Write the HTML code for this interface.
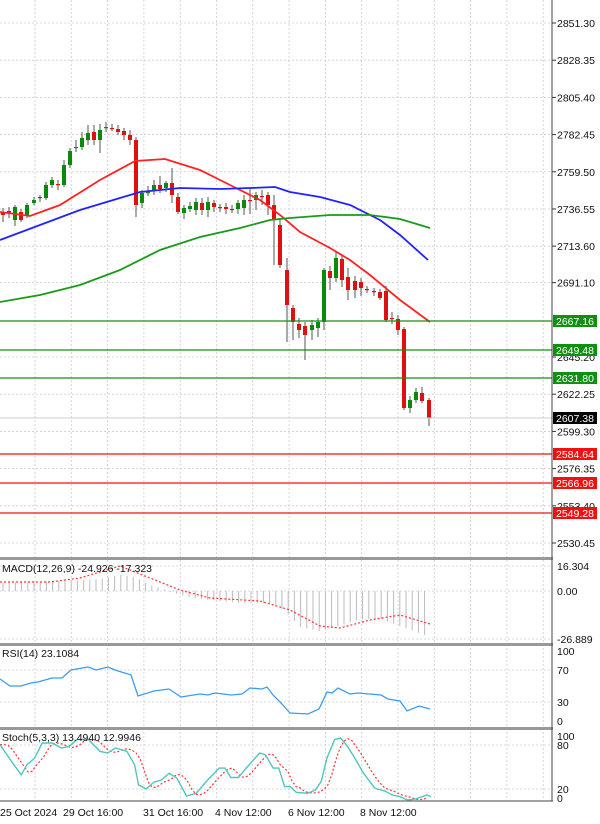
<!DOCTYPE html><html><head><meta charset="utf-8"><style>
body{margin:0;background:#fff;width:600px;height:819px;overflow:hidden;font-family:"Liberation Sans",sans-serif}
svg text{font-family:"Liberation Sans",sans-serif;font-size:10.5px;fill:#111}
</style></head><body>
<svg id="s" width="600" height="819" xmlns="http://www.w3.org/2000/svg"></svg>
<script>
var s=document.getElementById('s'),h='';
function Y(p){return 23+(2851.30-p)*1.6207;}
for(var x=35;x<552;x+=36.3){h+='<line x1="'+x+'" y1="0" x2="'+x+'" y2="800" stroke="#ccc" stroke-dasharray="2,2" stroke-width="0.8"/>';}
var labs=[2851.30,2828.35,2805.40,2782.45,2759.50,2736.55,2713.60,2691.10,2645.20,2622.25,2599.30,2576.35,2553.40,2530.45];
labs.forEach(function(p){var y=Y(p);h+='<line x1="0" y1="'+y+'" x2="552" y2="'+y+'" stroke="#ccc" stroke-dasharray="2,2" stroke-width="0.8"/><line x1="552" y1="'+y+'" x2="556" y2="'+y+'" stroke="#333"/><text x="557" y="'+(y+4)+'">'+p.toFixed(2)+'</text>';});
var C=[[3,212,215,208,222],[9,211,213,207,218],[15,220,207,205,226],[21,212,220,209,222],[27,216,205,203,218],[34,203,200,197,205],[40,198,197,195,202],[46,198,185,182,200],[52,185,180,177,188],[58,184,184,180,190],[64,185,165,160,187],[70,165,151,148,168],[76,148,147,140,152],[82,147,138,132,150],[88,140,133,125,145],[94,132,140,125,145],[100,140,130,124,153],[106,128,127,122,132],[112,128,128,124,131],[118,129,132,125,135],[124,131,135,128,140],[130,135,140,130,145],[136,140,205,137,217],[142,203,193,190,208],[148,193,192,186,196],[154,191,185,180,195],[160,185,189,176,193],[166,188,183,181,192],[172,183,195,168,203],[178,197,212,193,214],[184,213,208,205,219],[190,209,206,202,212],[196,210,202,198,215],[202,203,210,198,215],[208,210,202,197,217],[214,203,207,200,212],[220,207,207,204,212],[226,207,209,203,214],[232,209,209,205,213],[238,209,203,200,214],[244,208,200,195,215],[250,200,200,188,214],[256,200,195,192,210],[262,196,196,190,205],[268,195,205,192,215],[274,205,220,195,265],[280,225,265,218,268],[287,270,305,258,342],[293,308,322,305,340],[299,324,330,318,338],[305,326,335,322,360],[312,330,325,320,340],[318,328,322,318,337],[324,322,270,268,330],[330,271,278,266,290],[336,278,258,252,282],[342,259,280,255,287],[348,277,290,268,300],[355,281,290,276,298],[361,282,288,278,296],[367,289,289,286,293],[374,291,292,288,296],[380,292,298,289,300],[386,291,320,286,322],[392,318,319,312,324],[398,319,330,315,335],[404,329,408,327,410],[410,408,400,396,413],[416,400,392,388,403],[422,393,401,387,403],[429,400,418,398,426]];
C.forEach(function(c){var t=Math.min(c[1],c[2]),b=Math.max(c[1],c[2]);var col=c[2]<c[1]?'#0a8a0a':'#e01010';h+='<line x1="'+c[0]+'" y1="'+c[3]+'" x2="'+c[0]+'" y2="'+c[4]+'" stroke="#555" stroke-width="1"/><rect x="'+(c[0]-2)+'" y="'+t+'" width="4" height="'+Math.max(b-t,1.2)+'" fill="'+col+'"/>';});
function pl(pts,col,w,dash){return '<polyline fill="none" stroke="'+col+'" stroke-width="'+w+'"'+(dash?' stroke-dasharray="'+dash+'"':'')+' points="'+pts.map(function(p){return p.join(',')}).join(' ')+'"/>';}
h+=pl([[0,212],[30,216],[60,205],[100,180],[135,161],[165,159],[200,170],[230,185],[260,200],[280,215],[300,232],[330,248],[350,260],[370,275],[400,300],[430,322]],'#f22',1.8);
h+=pl([[0,240],[40,225],[80,210],[120,198],[140,192],[180,188],[220,189],[250,188],[275,187],[290,192],[320,197],[350,205],[380,220],[400,235],[428,260]],'#22f',1.8);
h+=pl([[0,302],[40,295],[80,285],[120,270],[160,250],[200,237],[240,228],[270,220],[290,218],[330,215],[370,215],[400,219],[430,228]],'#1a9a1a',1.8);
h+='<line x1="0" y1="418" x2="552" y2="418" stroke="#ccc"/>';
[[321,'2667.16','#109010'],[350,'2649.48','#109010'],[378,'2631.80','#109010'],[454,'2584.64','#f01010'],[483,'2566.96','#f01010'],[513,'2549.28','#f01010']].forEach(function(l){h+='<line x1="0" y1="'+l[0]+'" x2="552" y2="'+l[0]+'" stroke="'+l[2]+'" stroke-width="1.3"/><rect x="553" y="'+(l[0]-6)+'" width="44" height="12" fill="'+l[2]+'"/><text x="556" y="'+(l[0]+4)+'" style="fill:#fff">'+l[1]+'</text>';});
h+='<rect x="553" y="412" width="44" height="12" fill="#000"/><text x="556" y="422" style="fill:#fff">2607.38</text>';
[557,643,727].forEach(function(y){h+='<rect x="0" y="'+y+'" width="553" height="3" fill="#999"/>';});
h+='<line x1="552" y1="0" x2="552" y2="801" stroke="#444"/><line x1="0" y1="801" x2="553" y2="801" stroke="#444"/>';
[566,591,639].forEach(function(y){h+='<line x1="0" y1="'+y+'" x2="552" y2="'+y+'" stroke="#ccc" stroke-dasharray="2,2" stroke-width="0.8"/>';});
var hv=[[0,-8],[60,-10],[100,-12],[120,-16],[135,-14],[150,-6],[165,-1],[180,4],[200,8],[240,12],[270,12],[285,20],[300,36],[320,40],[340,35],[360,28],[380,28],[400,35],[430,46]];
function interp(a,x){for(var i=0;i<a.length-1;i++){if(x>=a[i][0]&&x<=a[i+1][0]){var t=(x-a[i][0])/(a[i+1][0]-a[i][0]);return a[i][1]+t*(a[i+1][1]-a[i][1]);}}return a[a.length-1][1];}
for(var x=3;x<=430;x+=6.2){var v=interp(hv,x);h+='<line x1="'+x+'" y1="591" x2="'+x+'" y2="'+(591+v)+'" stroke="#bbb" stroke-width="1"/>';}
h+=pl([[0,582],[50,582],[80,578],[120,566],[150,578],[180,590],[210,598],[260,601],[290,610],[320,626],[340,628],[370,620],[400,615],[430,624]],'#f33',1.2,'2,2');
h+='<text x="2" y="572">MACD(12,26,9) -24.926 -17.323</text><text x="557" y="570">16.304</text><text x="557" y="595">0.00</text><text x="557" y="643">-26.889</text>';
[670,702].forEach(function(y){h+='<line x1="0" y1="'+y+'" x2="552" y2="'+y+'" stroke="#ccc" stroke-dasharray="2,2" stroke-width="0.8"/>';});
h+=pl([[0,679],[10,686],[21,686],[31,683],[38,682],[52,678],[62,678],[71,670],[88,667],[96,670],[108,667],[115,670],[131,675],[138,696],[154,691],[169,689],[181,697],[200,694],[208,695],[215,693],[231,695],[242,694],[250,688],[262,689],[267,687],[273,695],[281,703],[290,713],[308,714],[319,709],[327,692],[332,693],[338,688],[350,694],[358,693],[381,695],[388,699],[400,701],[407,711],[419,706],[430,709]],'#3c9cf0',1.3);
h+='<text x="2" y="657">RSI(14) 23.1084</text><text x="557" y="655">100</text><text x="557" y="674">70</text><text x="557" y="706">30</text><text x="557" y="725">0</text>';
[745,789].forEach(function(y){h+='<line x1="0" y1="'+y+'" x2="552" y2="'+y+'" stroke="#ccc" stroke-dasharray="2,2" stroke-width="0.8"/>';});
var st=[[0,580],[30,630],[55,670],[70,640],[90,620],[110,575],[135,575],[160,590],[180,585],[200,565],[230,565],[260,600],[280,605],[300,590],[330,600],[350,640],[360,700],[380,712],[400,692],[420,685],[440,665],[460,680],[485,733],[510,725],[540,685],[570,650],[585,650],[600,678],[620,678],[640,650],[675,605],[690,610],[710,650],[725,650],[740,705],[755,705],[770,722],[800,725],[820,715],[835,690],[850,620],[870,565],[885,560],[900,580],[920,615],[945,665],[975,710],[1000,718],[1020,730],[1040,735],[1060,745],[1080,742],[1110,730],[1120,735]].map(function(p){return [+(p[0]/2.6).toFixed(1),+(550+p[1]/2.98).toFixed(1)];});
var sg=[];for(var x=0;x<=430;x+=4){var xs=x-7;var v=interp(st,Math.max(xs,0));var v2=interp(st,Math.max(xs-4,0));sg.push([x,((v+v2)/2).toFixed(1)]);}
h+=pl(sg,'#f33',1.2,'2,2');
h+=pl(st,'#4fc6c0',1.4);
h+='<text x="2" y="741">Stoch(5,3,3) 13.4940 12.9946</text><text x="557" y="740">100</text><text x="557" y="749">80</text><text x="557" y="793">20</text><text x="557" y="802">0</text>';
[[0,'25 Oct 2024'],[63,'29 Oct 16:00'],[143,'31 Oct 16:00'],[215,'4 Nov 12:00'],[288,'6 Nov 12:00'],[360,'8 Nov 12:00']].forEach(function(d){h+='<text x="'+d[0]+'" y="816">'+d[1]+'</text>';});
s.innerHTML=h;
</script></body></html>
